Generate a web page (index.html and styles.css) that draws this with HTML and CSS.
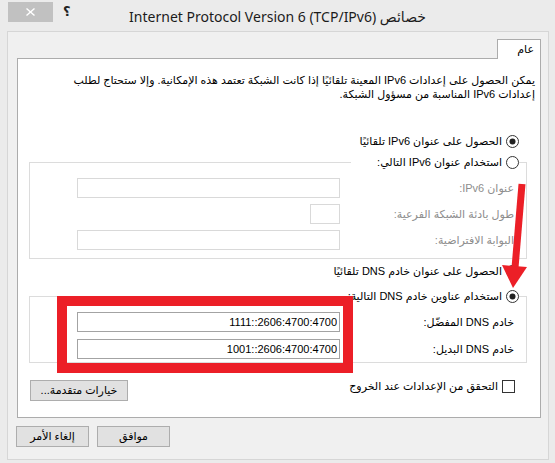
FILE: index.html
```html
<!DOCTYPE html>
<html lang="ar" dir="rtl">
<head>
<meta charset="utf-8">
<title>خصائص Internet Protocol Version 6 (TCP/IPv6)</title>
<link rel="stylesheet" href="styles.css">
</head>
<body>
<div class="window">
  <div class="titlebar">
    <div class="title">خصائص <bdi>Internet Protocol Version 6 (TCP/IPv6)</bdi></div>
    <div class="controls">
      <span class="help">؟</span>
      <span class="close"><svg width="9" height="8" viewBox="0 0 9 8"><path d="M0.5 0.5 L8.5 7.5 M8.5 0.5 L0.5 7.5" stroke="#fff" stroke-width="1.4" fill="none"/></svg></span>
    </div>
  </div>
  <div class="client">
    <div class="tabs"><div class="tab">عام</div></div>
    <div class="panel">
      <p class="desc">يمكن الحصول على إعدادات IPv6 المعينة تلقائيًا إذا كانت الشبكة تعتمد هذه الإمكانية. وإلا ستحتاج لطلب<br>إعدادات IPv6 المناسبة من مسؤول الشبكة.</p>

      <div class="option opt-auto6">
        <svg class="radio" width="13" height="13" viewBox="0 0 13 13"><circle cx="6.5" cy="6.5" r="6" fill="#fff" stroke="#333"/><circle cx="6.5" cy="6.5" r="3" fill="#222"/></svg>
        <span>الحصول على عنوان IPv6 تلقائيًا</span>
      </div>

      <fieldset class="group group6">
        <legend class="option legend6">
          <svg class="radio" width="13" height="13" viewBox="0 0 13 13"><circle cx="6.5" cy="6.5" r="6" fill="#fff" stroke="#333"/></svg>
          <span>استخدام عنوان IPv6 التالي:</span>
        </legend>
        <div class="field first">
          <span class="label off">عنوان IPv6:</span>
          <input class="input off" type="text" disabled>
        </div>
        <div class="field">
          <span class="label off">طول بادئة الشبكة الفرعية:</span>
          <div class="slot"><input class="input small off" type="text" disabled></div>
        </div>
        <div class="field">
          <span class="label off">البوابة الافتراضية:</span>
          <input class="input off" type="text" disabled>
        </div>
      </fieldset>

      <div class="option opt-autodns">
        <svg class="radio" width="13" height="13" viewBox="0 0 13 13"><circle cx="6.5" cy="6.5" r="6" fill="#fff" stroke="#333"/></svg>
        <span>الحصول على عنوان خادم DNS تلقائيًا</span>
      </div>

      <fieldset class="group groupdns">
        <legend class="option">
          <svg class="radio" width="13" height="13" viewBox="0 0 13 13"><circle cx="6.5" cy="6.5" r="6" fill="#fff" stroke="#333"/><circle cx="6.5" cy="6.5" r="3" fill="#222"/></svg>
          <span>استخدام عناوين خادم DNS التالية:</span>
        </legend>
        <div class="field first">
          <span class="label">خادم DNS المفضّل:</span>
          <input class="input on" type="text" value="2606:4700:4700::1111" readonly>
        </div>
        <div class="field second">
          <span class="label">خادم DNS البديل:</span>
          <input class="input on" type="text" value="2606:4700:4700::1001" readonly>
        </div>
      </fieldset>

      <div class="bottomrow">
        <div class="check">
          <span class="checkbox"></span>
          <span>التحقق من الإعدادات عند الخروج</span>
        </div>
        <button class="btn adv" type="button">خيارات متقدمة...</button>
      </div>
    </div>
    <div class="actions">
      <button class="btn act" type="button">موافق</button>
      <button class="btn act" type="button">إلغاء الأمر</button>
    </div>
  </div>
</div>

<div class="highlight"></div>
<svg class="arrow" width="40" height="115" viewBox="0 0 40 115">
  <line x1="27" y1="4" x2="20" y2="88" stroke="#ec1f27" stroke-width="7"/>
  <polygon points="7,85 32,87 18,108" fill="#ec1f27"/>
</svg>
</body>
</html>
```

FILE: styles.css
```css
* { box-sizing: border-box; }

html, body {
  margin: 0;
  padding: 0;
}

body {
  width: 555px;
  height: 463px;
  overflow: hidden;
  position: relative;
  background: #ebebeb;
  color: #000;
  font-family: "Liberation Sans", "DejaVu Sans", sans-serif;
  font-size: 11px;
}

.window {
  height: 463px;
  display: flex;
  flex-direction: column;
}

/* title bar */
.titlebar {
  height: 31px;
  flex: none;
  display: grid;
  grid-template-columns: 1fr auto 1fr;
}

.title {
  grid-column: 2;
  padding-top: 7px;
  font-family: "Noto Sans", "DejaVu Sans", sans-serif;
  font-size: 14px;
  line-height: 20px;
  color: #1b1b1b;
  white-space: nowrap;
}

.controls {
  grid-column: 3;
  justify-self: end;
  display: flex;
  align-items: flex-start;
  gap: 10px;
  margin-left: 8px;
}

.close {
  width: 45px;
  height: 20px;
  margin-top: 2px;
  background: #c1c1c1;
  display: flex;
  align-items: center;
  justify-content: center;
}

.help {
  margin-top: 4px;
  font-family: "DejaVu Sans", sans-serif;
  font-weight: bold;
  font-size: 13px;
  line-height: 16px;
  color: #222;
}

/* client area */
.client {
  flex: none;
  height: 429px;
  margin: 0 6px 0 7px;
  border: 1px solid #d6d6d6;
  background: #f0f0f0;
  padding: 7px 7px 0 9px;
}

.tabs {
  display: flex;
}

.tab {
  width: 44px;
  height: 20px;
  margin-bottom: -1px;
  position: relative;
  z-index: 1;
  border: 1px solid #acacac;
  border-bottom: none;
  background: #fff;
  padding: 2px 6px 0 0;
  line-height: 14px;
  white-space: nowrap;
}

.panel {
  height: 360px;
  border: 1px solid #acacac;
  background: #fff;
}

.desc {
  margin: 14px 5px 0 0;
  line-height: 14px;
  white-space: nowrap;
}

.option {
  display: flex;
  align-items: center;
  gap: 4px;
  height: 14px;
  line-height: 14px;
  white-space: nowrap;
}

.radio {
  flex: none;
  display: block;
}

.opt-auto6 {
  margin: 33px 21px 0 0;
}

.opt-autodns {
  margin: 5px 21px 0 0;
}

/* group boxes */
.group {
  min-width: 0;
  margin: 7px 13px 0 11px;
  border: 1px solid #dcdcdc;
  padding: 0 7px 8px 47px;
}

.group legend {
  padding: 0 0 0 2px;
}

.legend6 {
  width: 168px;
}

.groupdns {
  margin-top: 11px;
  padding-bottom: 3px;
}

.field {
  display: flex;
  align-items: center;
  justify-content: space-between;
  height: 20px;
  margin: 6px 5px 0 0;
  white-space: nowrap;
}

.field.first {
  margin-top: 9px;
}

.groupdns .field.second {
  margin-top: 7px;
}

.label.off {
  color: #8d8d8d;
}

.slot {
  width: 263px;
  display: flex;
}

.input {
  width: 263px;
  height: 20px;
  margin: 0;
  padding: 0 2px;
  border: 1px solid #d9d9d9;
  background: #fff;
  font: 11px "Liberation Sans", "DejaVu Sans", sans-serif;
  color: #000;
  text-align: right;
  outline: none;
}

.input.small {
  width: 30px;
}

.input.on {
  border-color: #a3a3a3;
}

/* bottom row */
.bottomrow {
  display: flex;
  justify-content: space-between;
  align-items: flex-start;
  margin-top: 17px;
  padding: 0 25px 0 12px;
}

.check {
  display: flex;
  align-items: center;
  gap: 4px;
  height: 13px;
  white-space: nowrap;
}

.checkbox {
  width: 13px;
  height: 13px;
  border: 1px solid #333;
  background: #fff;
  flex: none;
}

.btn {
  margin: 0;
  padding: 0;
  border: 1px solid #adadad;
  background: #e1e1e1;
  font: 11px "Liberation Sans", "DejaVu Sans", sans-serif;
  color: #000;
  white-space: nowrap;
}

.adv {
  width: 98px;
  height: 21px;
}

.actions {
  display: flex;
  justify-content: flex-end;
  gap: 8px;
  margin: 8px 0 0 -1px;
}

.act {
  width: 73px;
  height: 21px;
}

/* annotation overlays */
.highlight {
  position: absolute;
  left: 57px;
  top: 296px;
  width: 296px;
  height: 77px;
  border: 10px solid #ec1f27;
}

.arrow {
  position: absolute;
  left: 495px;
  top: 180px;
  overflow: visible;
}
```
